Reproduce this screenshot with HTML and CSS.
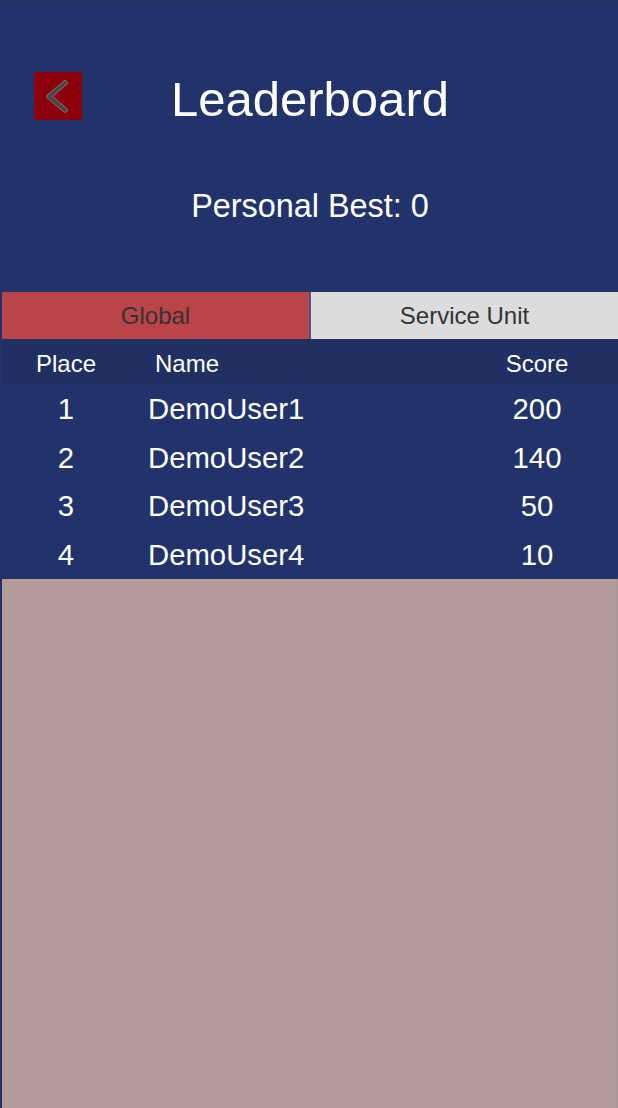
FILE: index.html
```html
<!DOCTYPE html>
<html>
<head>
<meta charset="utf-8">
<link rel="stylesheet" href="styles.css">
</head>
<body>
<div class="screen">
  <div class="top">
    <div class="title-row">
      <button class="back" aria-label="Back">
        <svg width="48" height="48" viewBox="0 0 48 48">
          <path d="M31 11 L15 24.5 L31 38" fill="none" stroke="#7a6a6a" stroke-width="5.5" stroke-linecap="round" stroke-linejoin="round"/>
          <path d="M31 11 L15 24.5 L31 38" fill="none" stroke="#444" stroke-width="3.5" stroke-linecap="round" stroke-linejoin="round"/>
        </svg>
      </button>
      <h1 class="title">Leaderboard</h1>
    </div>
    <div class="best">Personal Best: 0</div>
  </div>
  <div class="tabs">
    <div class="tab active">Global</div>
    <div class="tab">Service Unit</div>
  </div>
  <div class="head">
    <span class="c-place">Place</span>
    <span class="c-name head-name">Name</span>
    <span class="c-score">Score</span>
  </div>
  <div class="rows">
    <div class="row"><span class="c-place">1</span><span class="c-name">DemoUser1</span><span class="c-score">200</span></div>
    <div class="row"><span class="c-place">2</span><span class="c-name">DemoUser2</span><span class="c-score">140</span></div>
    <div class="row"><span class="c-place">3</span><span class="c-name">DemoUser3</span><span class="c-score">50</span></div>
    <div class="row"><span class="c-place">4</span><span class="c-name">DemoUser4</span><span class="c-score">10</span></div>
  </div>
  <div class="empty"></div>
</div>
</body>
</html>
```

FILE: styles.css
```css
html, body {
  margin: 0;
  padding: 0;
}
body {
  background: #22336b;
  font-family: "Liberation Sans", Arial, sans-serif;
  color: #ffffff;
}
.screen {
  height: 1108px;
  display: flex;
  flex-direction: column;
  border-top: 1px solid #2a3656;
  box-sizing: border-box;
}
.top {
  height: 291px;
  display: flex;
  flex-direction: column;
}
.title-row {
  position: relative;
  height: 174px;
  padding-top: 71px;
  box-sizing: border-box;
}
.back {
  margin-left: 34px;
  width: 48px;
  height: 48px;
  padding: 0;
  border: 0;
  background: #8c000b;
  display: block;
}
.back svg { display: block; }
.title {
  position: absolute;
  left: 0;
  right: 0;
  top: 70px;
  margin: 0;
  text-align: center;
  font-weight: normal;
  font-size: 49px;
  line-height: 56px;
  padding-left: 2px;
}
.best {
  text-align: center;
  font-size: 32.4px;
  line-height: 36px;
  margin-top: 13px;
  padding-left: 2px;
}
.tabs {
  display: grid;
  grid-template-columns: 307px 1fr;
  gap: 2px;
  margin-left: 2px;
  height: 47px;
  background: #4a5680;
}
.tab {
  background: #dcdcdc;
  color: #333333;
  font-size: 24px;
  display: flex;
  align-items: center;
  justify-content: center;
}
.tab.active {
  background: #bb4449;
}
.head {
  display: flex;
  align-items: center;
  height: 45px;
  padding-top: 5px;
  box-sizing: border-box;
  background: #213063;
  font-size: 24px;
  margin-left: 2px;
}
.rows {
  margin-left: 2px;
  padding-top: 1px;
}
.row {
  display: flex;
  align-items: center;
  height: 48.5px;
  font-size: 29.3px;
}
.c-place {
  width: 128px;
  text-align: center;
}
.c-name {
  width: 246px;
  padding-left: 18px;
}
.head-name {
  padding-left: 25px;
  width: 239px;
}
.c-score {
  flex: 1;
  text-align: center;
  padding-left: 62px;
}
.empty {
  flex: 1;
  background: #b59a9b;
  margin-left: 2px;
  border-right: 1px solid #a89595;
}
```
